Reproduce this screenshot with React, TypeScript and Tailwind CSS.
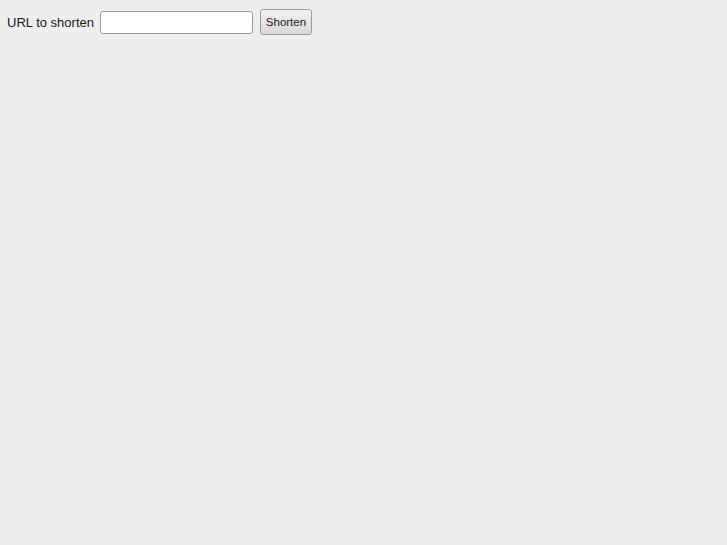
export default function App() {
  return (
    <div className="min-h-[545px] bg-[#eeeeee] font-['Liberation_Sans',Arial,sans-serif] text-[#1a1a1a]">
      <form className="flex items-center pt-[9px] pl-[7px]" onSubmit={e => e.preventDefault()}>
        <label className="text-[13px] leading-none mr-[6px]">URL to shorten</label>
        <input
          type="text"
          className="w-[153px] h-[23px] bg-white border border-[#9a9a9a] rounded-[3px] px-1 text-[13px] outline-none"
        />
        <button
          type="submit"
          className="ml-[7px] w-[52px] h-[26px] pt-[2px] text-[11.5px] text-[#1a1a1a] rounded-[3px] border border-[#9a9a9a] bg-gradient-to-b from-[#f2f2f2] to-[#d8d8d8]"
        >
          Shorten
        </button>
      </form>
    </div>
  )
}
